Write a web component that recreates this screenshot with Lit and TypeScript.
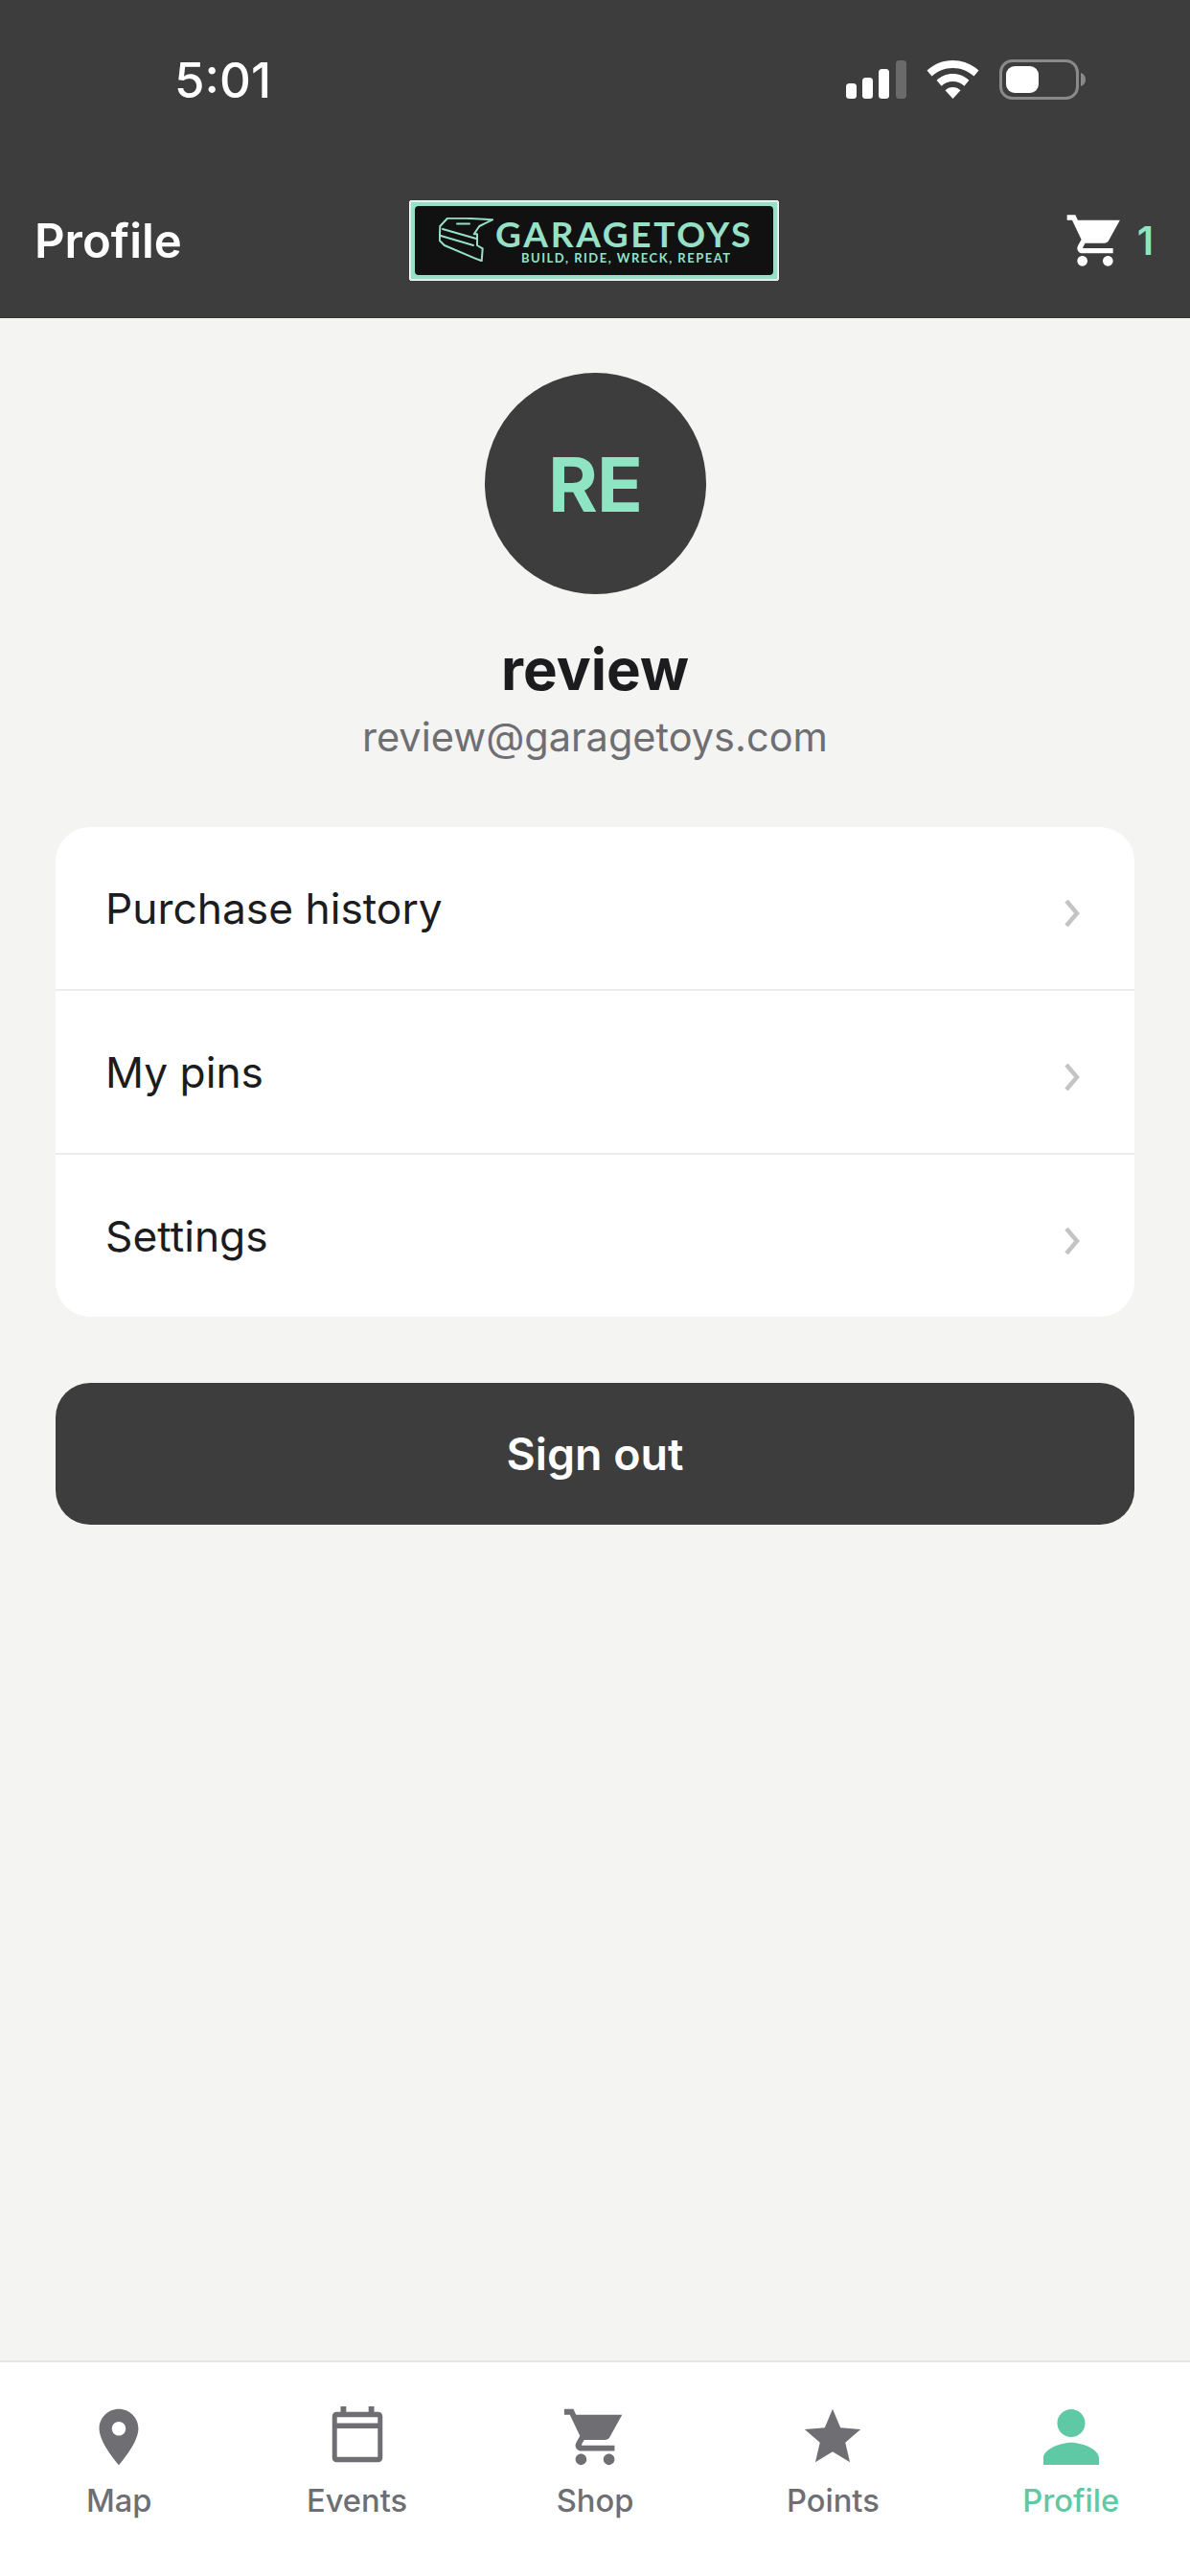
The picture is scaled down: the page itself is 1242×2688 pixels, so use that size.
import { LitElement, html, css, svg } from "lit";
import { customElement } from "lit/decorators.js";

const CART =
  "M7 18c-1.1 0-1.99.9-1.99 2S5.9 22 7 22s2-.9 2-2-.9-2-2-2zM1 2v2h2l3.6 7.59-1.35 2.45c-.16.28-.25.61-.25.96 0 1.1.9 2 2 2h12v-2H7.42c-.14 0-.25-.11-.25-.25l.03-.12.9-1.63h7.45c.75 0 1.41-.41 1.75-1.03L21.7 4H5.21l-.94-2H1zm16 16c-1.1 0-1.99.9-1.99 2s.89 2 1.99 2 2-.9 2-2-.9-2-2-2z";

const tabs = [
  {
    label: "Map",
    box: "0 0 24 24",
    icon: svg`<path fill-rule="evenodd" d="M12 2C8.13 2 5 5.13 5 9c0 5.25 7 13 7 13s7-7.75 7-13c0-3.87-3.13-7-7-7zm0 9.5a2.5 2.5 0 1 1 0-5 2.5 2.5 0 0 1 0 5z"/>`,
  },
  {
    label: "Events",
    box: "0 0 24 24",
    icon: svg`<path fill-rule="evenodd" d="M6 1h2v2h8V1h2v2h1.5C20.33 3 21 3.67 21 4.5v15c0 .83-.67 1.5-1.5 1.5h-15C3.67 21 3 20.33 3 19.5v-15C3 3.67 3.67 3 4.5 3H6zM4.7 4.9V7h14.6V4.9zM4.7 8.9v10.2h14.6V8.9z"/>`,
  },
  { label: "Shop", box: "0 0 24 24", icon: svg`<path d=${CART}/>` },
  {
    label: "Points",
    box: "0 0 24 24",
    icon: svg`<path d="M12 17.27L18.18 21l-1.64-7.03L22 9.24l-7.19-.61L12 2 9.19 8.63 2 9.24l5.46 4.73L5.82 21z"/>`,
  },
  {
    label: "Profile",
    box: "2.35 2.35 19.3 19.3",
    icon: svg`<path d="M12 12c2.21 0 4-1.79 4-4s-1.79-4-4-4-4 1.79-4 4 1.79 4 4 4zm0 1.6c-2.67 0-8 1.74-8 4.4v2h16v-2c0-2.66-5.33-4.4-8-4.4z"/>`,
    active: true,
  },
];

const menu = ["Purchase history", "My pins", "Settings"];

@customElement("app-root")
export class AppRoot extends LitElement {
  static styles = css`
    :host {
      display: flex;
      flex-direction: column;
      width: 1242px;
      height: 2688px;
      background: #f4f4f2;
      font-family: Inter, "Liberation Sans", sans-serif;
    }
    .header {
      background: #3d3d3d;
      height: 331px;
      flex: none;
      border-bottom: 1px solid #333;
      box-sizing: content-box;
    }
    .status {
      height: 166px;
      box-sizing: border-box;
      padding: 0 109px 0 182px;
      display: flex;
      align-items: center;
      justify-content: space-between;
    }
    .time {
      font-size: 51px;
      font-weight: 500;
      color: #fff;
      line-height: 1;
    }
    .status-icons {
      display: flex;
      align-items: center;
      gap: 21px;
    }
    .status-icons svg {
      display: block;
    }
    .nav {
      height: 165px;
      padding: 5px 38px 0 36px;
      display: grid;
      grid-template-columns: 1fr auto 1fr;
      align-items: center;
      box-sizing: border-box;
    }
    .title {
      font-size: 49px;
      font-weight: 600;
      color: #fff;
    }
    .logo {
      width: 386px;
      height: 84px;
      box-sizing: border-box;
      background: #97e0c8;
      border: 1px solid #fff;
      border-radius: 2px;
      padding: 5px;
      box-shadow: inset 0 0 0 1px #d4f2e8;
    }
    .logo-inner {
      height: 100%;
      background: #111;
      border-radius: 4px;
      display: flex;
      align-items: flex-start;
      padding: 12px 0 0 25px;
      box-sizing: border-box;
      gap: 2px;
    }
    .logo-inner svg {
      flex: none;
      display: block;
    }
    .logo-text {
      display: flex;
      flex-direction: column;
      align-items: flex-start;
      color: #97e0c8;
      font-family: Lato, sans-serif;
      line-height: 1;
    }
    .brand {
      font-size: 37px;
      font-weight: 700;
      height: 33px;
      line-height: 33px;
      letter-spacing: 2.7px;
    }
    .tagline {
      font-size: 13px;
      font-weight: 700;
      letter-spacing: 1.5px;
      margin-top: 3px;
      margin-left: 27px;
    }
    .cart {
      justify-self: end;
      display: flex;
      align-items: center;
      gap: 12px;
    }
    .cart svg {
      display: block;
      fill: #fff;
    }
    .count {
      font-size: 41px;
      font-weight: 600;
      color: #8fe4c4;
    }
    .main {
      flex: 1;
      display: flex;
      flex-direction: column;
      align-items: center;
      padding: 57px 58px 0;
    }
    .avatar {
      width: 231px;
      height: 231px;
      border-radius: 50%;
      background: #3d3d3d;
      color: #8fe4c4;
      display: flex;
      align-items: center;
      justify-content: center;
      font-size: 79px;
      font-weight: 700;
      letter-spacing: -1px;
    }
    .name {
      font-size: 60px;
      font-weight: 700;
      color: #1c1c1e;
      line-height: 72px;
      margin-top: 42px;
    }
    .email {
      font-size: 41.5px;
      color: #6e6e73;
      line-height: 52px;
      margin-top: 9px;
    }
    .card {
      width: 100%;
      background: #fff;
      border-radius: 36px;
      margin-top: 68px;
      overflow: hidden;
    }
    .row {
      height: 171px;
      box-sizing: border-box;
      padding: 0 56px 0 52px;
      display: flex;
      align-items: center;
      justify-content: space-between;
      border-bottom: 2px solid #ececec;
      font-size: 44.3px;
      color: #1c1c1e;
    }
    .row:last-child {
      border-bottom: none;
      height: 169px;
    }
    .row svg {
      display: block;
      margin-top: 10px;
    }
    .signout {
      width: 100%;
      height: 148px;
      border-radius: 36px;
      background: #3d3d3d;
      color: #fff;
      font-size: 46.5px;
      font-weight: 600;
      display: flex;
      align-items: center;
      justify-content: center;
      margin-top: 69px;
    }
    .tabbar {
      flex: none;
      height: 225px;
      box-sizing: border-box;
      background: #fff;
      border-top: 2px solid #e5e5e5;
      display: grid;
      grid-template-columns: repeat(5, 1fr);
      padding-top: 43px;
    }
    .tab {
      display: flex;
      flex-direction: column;
      align-items: center;
      color: #6e6e73;
      font-size: 32.7px;
      font-weight: 500;
      line-height: 40px;
    }
    .tab svg {
      display: block;
      fill: currentColor;
      margin-bottom: 11px;
    }
    .tab.active {
      color: #5fc8a4;
    }
  `;

  render() {
    return html`
      <div class="header">
        <div class="status">
          <span class="time">5:01</span>
          <div class="status-icons">
            <svg width="63" height="40" viewBox="0 0 63 40">
              <rect x="0" y="24" width="11" height="16" rx="3.5" fill="#fff" />
              <rect x="17" y="18" width="11" height="22" rx="3.5" fill="#fff" />
              <rect x="34" y="9" width="11" height="31" rx="3.5" fill="#fff" />
              <rect x="52" y="0" width="11" height="40" rx="3.5" fill="#6a6a6a" />
            </svg>
            <svg width="55" height="40" viewBox="0 0 55 40" fill="#fff">
              <path d="M27.5 0C17 0 7.7 4 0.5 10.6l5 6C11.4 11 19 7.9 27.5 7.9s16 3.1 22 8.7l5-6C47.3 4 38 0 27.5 0z" />
              <path d="M27.5 14c-6.6 0-12.4 2.5-16.9 6.7l5 6c3-3 7.2-4.7 11.9-4.7s8.9 1.7 11.9 4.7l5-6C39.9 16.5 34.1 14 27.5 14z" />
              <path d="M27.5 28c-3.1 0-6 1.2-8 3.3l8 8.7 8-8.7c-2-2.1-4.9-3.3-8-3.3z" />
            </svg>
            <svg width="90" height="42" viewBox="0 0 90 42">
              <rect x="1.5" y="1.5" width="80" height="39" rx="12" fill="none" stroke="#8a8a8a" stroke-width="3" />
              <rect x="7" y="7" width="34" height="28" rx="9" fill="#fff" />
              <path d="M85 14c3 1 5 3.5 5 7s-2 6-5 7z" fill="#8a8a8a" />
            </svg>
          </div>
        </div>
        <div class="nav">
          <span class="title">Profile</span>
          <div class="logo">
            <div class="logo-inner">
              <svg width="57" height="46" viewBox="0 0 57 46" fill="none" stroke="#97e0c8" stroke-width="2" stroke-linejoin="round" stroke-linecap="round">
                <path d="M56 2.3 29 .8H9L1.3 9 .8 24l5 5 31.5 13.3 7.4 3 1-13-5.700-3.300V17.300h-3.300L42.300 9z" />
                <path d="M4 12l35 10M2 19l34 10" />
                <path d="M19 6.5h13" />
              </svg>
              <div class="logo-text">
                <span class="brand">GARAGETOYS</span>
                <span class="tagline">BUILD, RIDE, WRECK, REPEAT</span>
              </div>
            </div>
          </div>
          <div class="cart">
            <svg width="64" height="64" viewBox="0 0 24 24"><path d=${CART} /></svg>
            <span class="count">1</span>
          </div>
        </div>
      </div>
      <div class="main">
        <div class="avatar">RE</div>
        <div class="name">review</div>
        <div class="email">review@garagetoys.com</div>
        <div class="card">
          ${menu.map(
            (m) => html`<div class="row">
              <span>${m}</span>
              <svg width="18" height="28" viewBox="0 0 18 28" fill="none" stroke="#c4c4c4" stroke-width="4.5">
                <path d="M3 1l11 13L3 27" />
              </svg>
            </div>`
          )}
        </div>
        <div class="signout">Sign out</div>
      </div>
      <div class="tabbar">
        ${tabs.map(
          (t) => html`<div class="tab ${t.active ? "active" : ""}">
            <svg width="70" height="70" viewBox=${t.box}>${t.icon}</svg>
            <span>${t.label}</span>
          </div>`
        )}
      </div>
    `;
  }
}
